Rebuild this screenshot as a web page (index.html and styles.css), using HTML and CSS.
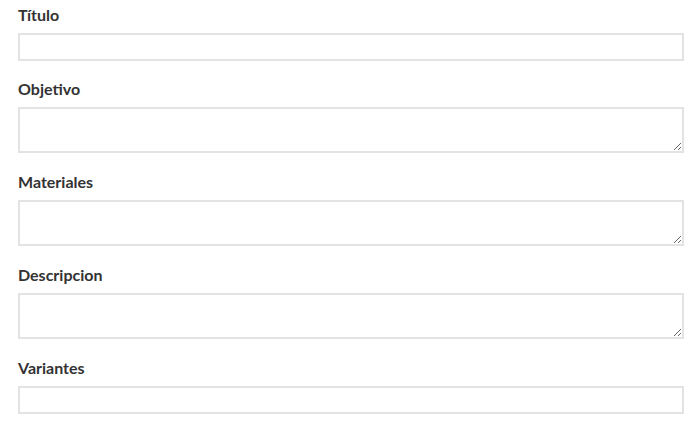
FILE: index.html
```html
<!DOCTYPE html>
<html>

<head>
  <meta charset="UTF-8">
  <title>Actividad</title>
  <link rel="stylesheet" href="styles.css">
</head>

<body>
  <form class="activity-form">
    <div class="form-group">
      <label for="titulo">Título</label>
      <input id="titulo" class="form-control" type="text">
    </div>

    <div class="form-group">
      <label for="objetivo">Objetivo</label>
      <textarea id="objetivo" class="form-control area"></textarea>
    </div>

    <div class="form-group">
      <label for="materiales">Materiales</label>
      <textarea id="materiales" class="form-control area"></textarea>
    </div>

    <div class="form-group">
      <label for="descripcion">Descripcion</label>
      <textarea id="descripcion" class="form-control area"></textarea>
    </div>

    <div class="form-group">
      <label for="variantes">Variantes</label>
      <input id="variantes" class="form-control" type="text">
    </div>
  </form>
</body>

</html>
```

FILE: styles.css
```css
body {
  margin: 0;
  background: #fff;
  color: #333;
  font-family: 'Lato', 'Open Sans', sans-serif;
}

.activity-form {
  display: flex;
  flex-direction: column;
  gap: 18px;
  padding: 5px 16px 0 18px;
}

.form-group {
  display: flex;
  flex-direction: column;
}

.form-group label {
  font-size: 16px;
  font-weight: 700;
  line-height: 20px;
  margin-bottom: 8px;
}

.form-control {
  display: block;
  box-sizing: border-box;
  width: 100%;
  height: 28px;
  margin: 0;
  padding: 4px 8px;
  border: 2px solid #e3e3e3;
  border-radius: 0;
  background: #fff;
  font-family: inherit;
  font-size: 14px;
  outline: none;
}

.area {
  height: 46px;
  resize: vertical;
}

.form-group:has(.area) + .form-group {
  margin-top: 1px;
}
```
